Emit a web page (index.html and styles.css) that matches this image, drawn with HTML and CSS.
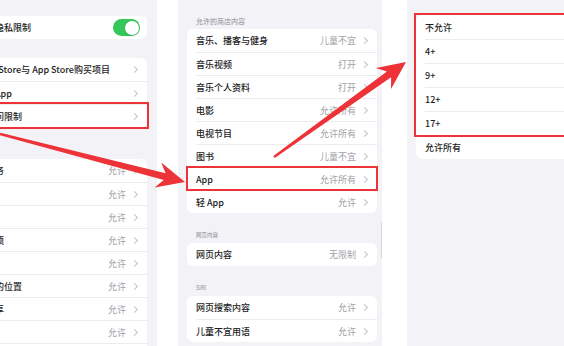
FILE: index.html
```html
<!DOCTYPE html>
<html lang="zh-CN">
<head>
    <meta charset="UTF-8">
    <meta name="viewport" content="width=device-width, initial-scale=1.0">
    <title>内容和隐私访问限制</title>
    <link rel="stylesheet" href="styles.css">
</head>
<body>
    <section class="shots">
        <div class="phone phone-privacy">
            <div class="card">
                <div class="row">
                    <span class="label">内容与隐私限制</span>
                    <span class="switch"></span>
                </div>
            </div>
            <div class="card gap-sm">
                <div class="row"><span class="label">iTunes Store与 App Store购买项目</span><span class="value go"></span></div>
                <div class="row"><span class="label">允许的App</span><span class="value go"></span></div>
                <div class="row mark"><span class="label">内容访问限制</span><span class="value go"></span></div>
            </div>
            <div class="card gap-lg">
                <div class="row"><span class="label">定位服务</span><span class="value go">允许</span></div>
                <div class="row"><span class="label">通讯录</span><span class="value go">允许</span></div>
                <div class="row"><span class="label">日历</span><span class="value go">允许</span></div>
                <div class="row"><span class="label">提醒事项</span><span class="value go">允许</span></div>
                <div class="row"><span class="label">照片</span><span class="value go">允许</span></div>
                <div class="row"><span class="label">共享我的位置</span><span class="value go">允许</span></div>
                <div class="row"><span class="label">蓝牙共享</span><span class="value go">允许</span></div>
                <div class="row"><span class="label">麦克风</span><span class="value go">允许</span></div>
                <div class="row"><span class="label">语音识别</span><span class="value go">允许</span></div>
            </div>
        </div>

        <div class="phone phone-store">
            <div class="caption">允许的商店内容</div>
            <div class="card">
                <div class="row"><span class="label">音乐、播客与健身</span><span class="value go">儿童不宜</span></div>
                <div class="row"><span class="label">音乐视频</span><span class="value go">打开</span></div>
                <div class="row"><span class="label">音乐个人资料</span><span class="value go">打开</span></div>
                <div class="row"><span class="label">电影</span><span class="value go">允许所有</span></div>
                <div class="row"><span class="label">电视节目</span><span class="value go">允许所有</span></div>
                <div class="row"><span class="label">图书</span><span class="value go">儿童不宜</span></div>
                <div class="row mark"><span class="label">App</span><span class="value go">允许所有</span></div>
                <div class="row"><span class="label">轻 App</span><span class="value go">允许</span></div>
            </div>
            <div class="caption small">网页内容</div>
            <div class="card">
                <div class="row"><span class="label">网页内容</span><span class="value go">无限制</span></div>
            </div>
            <div class="caption small">SIRI</div>
            <div class="card">
                <div class="row"><span class="label">网页搜索内容</span><span class="value go">允许</span></div>
                <div class="row"><span class="label">儿童不宜用语</span><span class="value go">允许</span></div>
            </div>
        </div>

        <div class="phone phone-apps">
            <div class="card">
                <div class="mark-group">
                    <div class="row"><span class="label">不允许</span></div>
                    <div class="row"><span class="label">4+</span></div>
                    <div class="row"><span class="label">9+</span></div>
                    <div class="row"><span class="label">12+</span></div>
                    <div class="row"><span class="label">17+</span></div>
                </div>
                <div class="row"><span class="label">允许所有</span></div>
            </div>
        </div>
    </section>

    <!-- annotation arrows drawn over the screenshots -->
    <svg class="arrows" viewBox="0 0 564 346">
        <polygon points="0.3,132.8 165.6,173.3 161.2,162.4 185,182 154.6,187.6 163.8,180.1 -0.3,135.2"/>
        <polygon points="273.3,156 386.9,71.6 375.8,68 406,62 391,89 391.1,77.2 274.7,158"/>
    </svg>
</body>
</html>
```

FILE: styles.css
```css
* {
    box-sizing: border-box;
}

html, body {
    margin: 0;
    height: 100%;
}

body {
    position: relative;
    overflow: hidden;
    background: #fff;
    color: #1c1c1e;
    font-family: "Noto Sans CJK SC", "Noto Sans", sans-serif;
}

.shots {
    display: flex;
    height: 346px;
}

.phone {
    position: relative;
    flex: none;
    height: 100%;
    background: #f2f2f7;
}

.phone-privacy {
    width: 207px;
    margin-left: -50px;
    padding: 16px 10px 0 9px;
}

.phone-store {
    width: 204px;
    margin-left: 21px;
    padding: 16px 5px 0 9px;
}

/* scroll indicator */
.phone-store::after {
    content: '';
    position: absolute;
    right: 0;
    top: 222px;
    width: 1.5px;
    height: 36px;
    border-radius: 1px;
    background: #d6d6db;
}

.phone-apps {
    width: 200px;
    margin-left: 25px;
    padding: 15px 0 0 9px;
}

.card {
    background: #fff;
    border-radius: 6px;
    padding-left: 9px;
}

.gap-sm {
    margin-top: 19px;
}

.gap-lg {
    margin-top: 32px;
}

.row {
    display: flex;
    align-items: center;
    justify-content: space-between;
    height: 23px;
    padding-right: 9px;
    font-size: 9px;
    line-height: 1;
    white-space: nowrap;
}

.row + .row, .mark-group + .row {
    border-top: 1px solid #ececf0;
}

.phone-apps .row {
    height: 24px;
}

.label {
    font-weight: 500;
}

.value {
    display: flex;
    align-items: center;
    color: #a2a2a7;
}

.go::after {
    content: '';
    width: 4px;
    height: 4px;
    margin-left: 6px;
    margin-right: 1px;
    border-top: 1px solid #c4c4c9;
    border-right: 1px solid #c4c4c9;
    transform: rotate(45deg);
}

.caption {
    height: 10px;
    line-height: 10px;
    margin-bottom: 3px;
    padding-left: 9px;
    font-size: 7px;
    color: #8e8e93;
}

.caption.small {
    margin-top: 17px;
    font-size: 5.5px;
}

.switch {
    position: relative;
    width: 27px;
    height: 17px;
    margin-right: -2px;
    border-radius: 9px;
    background: #34c759;
}

.switch::after {
    content: '';
    position: absolute;
    right: 1.5px;
    top: 1.5px;
    width: 14px;
    height: 14px;
    border-radius: 50%;
    background: #fff;
    box-shadow: 0 1px 2px rgba(0, 0, 0, 0.15);
}

.mark {
    outline: 2px solid #ee3338;
    outline-offset: 0;
}

.phone-store .mark {
    margin-left: -9px;
    padding-left: 9px;
    outline-offset: -1px;
}

.mark-group {
    margin-left: -9px;
    padding-left: 9px;
    outline: 2px solid #ee3338;
}

.arrows {
    position: absolute;
    left: 0;
    top: 0;
    width: 564px;
    height: 346px;
    fill: #ee3338;
    pointer-events: none;
}
```
